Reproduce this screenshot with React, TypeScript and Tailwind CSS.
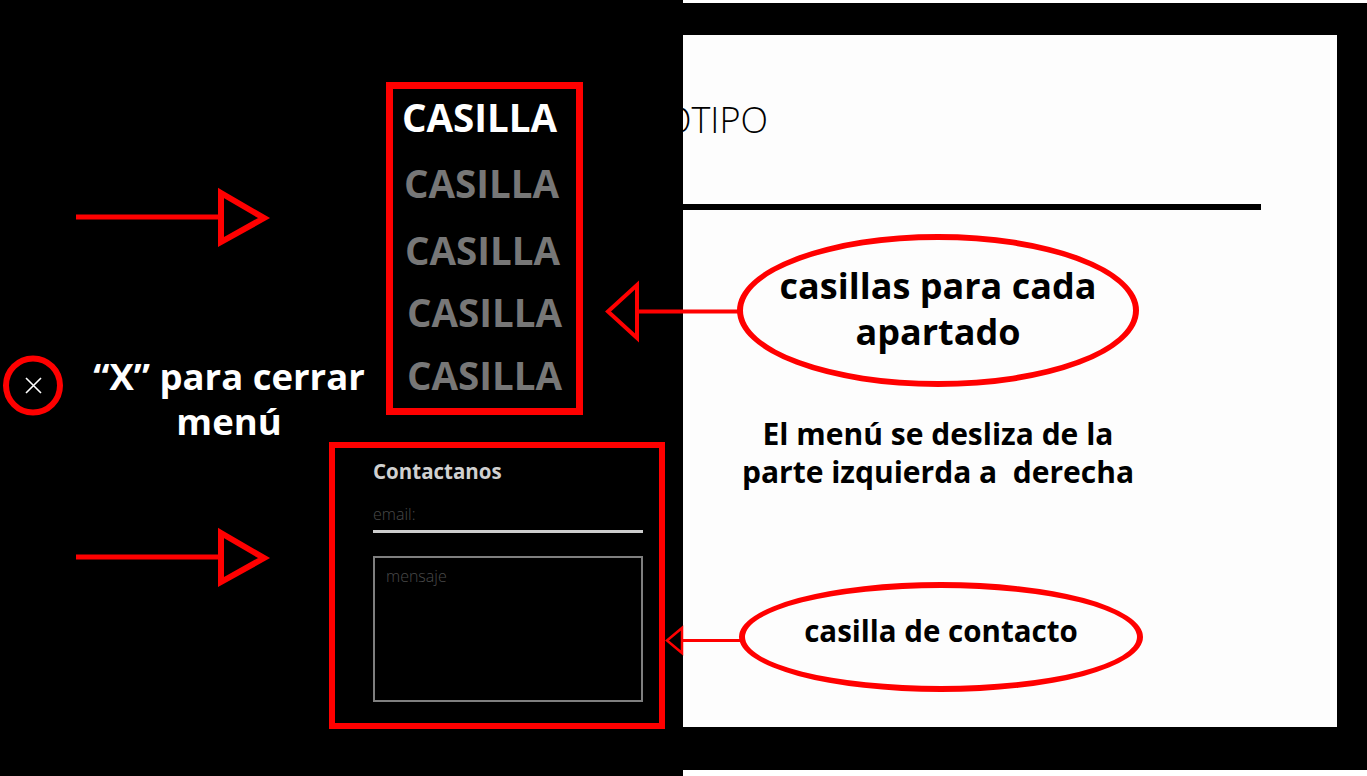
export default function App() {
  return (
    <div className="relative flex h-[776px] w-[1367px] overflow-hidden bg-black font-['Open_Sans',sans-serif]">
      {/* left sliding menu */}
      <div className="flex h-full w-[683px] shrink-0 flex-col bg-black">
        <div className="ml-[386px] mt-[82px] flex h-[333px] w-[197px] flex-col border-[7px] border-[#ff0000] pl-[9px] text-[38.5px] font-bold leading-[56px] text-[#777777]">
          <span className="text-white">CASILLA</span>
          <span className="ml-[2px] mt-[10px]">CASILLA</span>
          <span className="ml-[3px] mt-[11px]">CASILLA</span>
          <span className="ml-[5px] mt-[6px]">CASILLA</span>
          <span className="ml-[5px] mt-[7px]">CASILLA</span>
        </div>
        <div className="ml-[329px] mt-[27px] flex h-[287px] w-[336px] flex-col border-[6px] border-[#ff0000] pl-[38px] pr-[16px] pt-[9px]">
          <div className="text-[20.5px] font-bold leading-[28px] text-[#d0d0d0]">Contactanos</div>
          <div className="mt-[18px] text-[16px] font-light leading-[22px] text-[#4a4a4a]">email:</div>
          <div className="mt-[5px] h-[3px] bg-[#cdcdcd]" />
          <div className="mt-[23px] h-[146px] border-2 border-[#7f7f7f] pl-[11px] pt-[7px] text-[16px] font-light leading-[22px] text-[#4a4a4a]">
            mensaje
          </div>
        </div>
      </div>

      {/* page behind */}
      <div className="flex h-full flex-1 flex-col">
        <div className="h-[3px] bg-white" />
        <div className="h-[32px]" />
        <div className="flex h-[692px]">
          <div className="flex w-[654px] flex-col overflow-hidden bg-[#fdfdfd]">
            <div className="mt-[67px] flex h-[36px] w-[85px] justify-end whitespace-nowrap text-[36px] font-light leading-[36px] text-black">
              <span>LOGOTIPO</span>
            </div>
            <div className="mt-[66px] h-[6px] w-[578px] bg-black" />
            <div className="ml-[54px] mt-[24px] flex h-[153px] w-[402px] items-center justify-center rounded-[50%] border-[6px] border-[#ff0000] pb-[3px] text-center text-[36px] font-bold leading-[46px] text-black">
              <span>
                casillas para cada
                <br />
                apartado
              </span>
            </div>
            <div className="mt-[28px] w-[510px] text-center text-[30px] font-bold leading-[38px] text-black">
              El menú se desliza de la
              <br />
              parte izquierda a&nbsp; derecha
            </div>
            <div className="ml-[56px] mt-[91px] flex h-[110px] w-[404px] items-center justify-center rounded-[50%] border-[6px] border-[#ff0000] pb-[13px] text-[29.5px] font-bold leading-[38px] text-black">
              casilla de contacto
            </div>
          </div>
          <div className="flex-1" />
        </div>
        <div className="h-[43px]" />
        <div className="h-[6px] bg-white" />
      </div>

      {/* annotation for close button */}
      <div className="absolute left-[79px] top-[354px] w-[300px] text-center text-[36.5px] font-bold leading-[45px] text-white">
        “X” para cerrar
        <br />
        menú
      </div>

      {/* arrows and close icon */}
      <svg
        className="pointer-events-none absolute left-0 top-0"
        width="1367"
        height="776"
        viewBox="0 0 1367 776"
      >
        <line x1="76" y1="217" x2="221" y2="217" stroke="#ff0000" strokeWidth="5" />
        <polygon points="221,193 264,218 221,242" fill="none" stroke="#ff0000" strokeWidth="6" />
        <line x1="76" y1="557" x2="221" y2="557" stroke="#ff0000" strokeWidth="5" />
        <polygon points="221,533 264,558 221,582" fill="none" stroke="#ff0000" strokeWidth="6" />

        <line x1="637" y1="311.5" x2="741" y2="311.5" stroke="#ff0000" strokeWidth="4" />
        <polygon points="608,311.5 637,285 637,338" fill="none" stroke="#ff0000" strokeWidth="4" />

        <line x1="683" y1="640.5" x2="743" y2="640.5" stroke="#ff0000" strokeWidth="3" />
        <polygon points="667,640.5 682,628 682,653" fill="none" stroke="#ff0000" strokeWidth="2.5" />

        <circle cx="33" cy="385.5" r="27" fill="none" stroke="#ff0000" strokeWidth="6" />
        <path d="M26 378 L41 393 M41 378 L26 393" stroke="#ffffff" strokeWidth="1.6" />
      </svg>
    </div>
  );
}
